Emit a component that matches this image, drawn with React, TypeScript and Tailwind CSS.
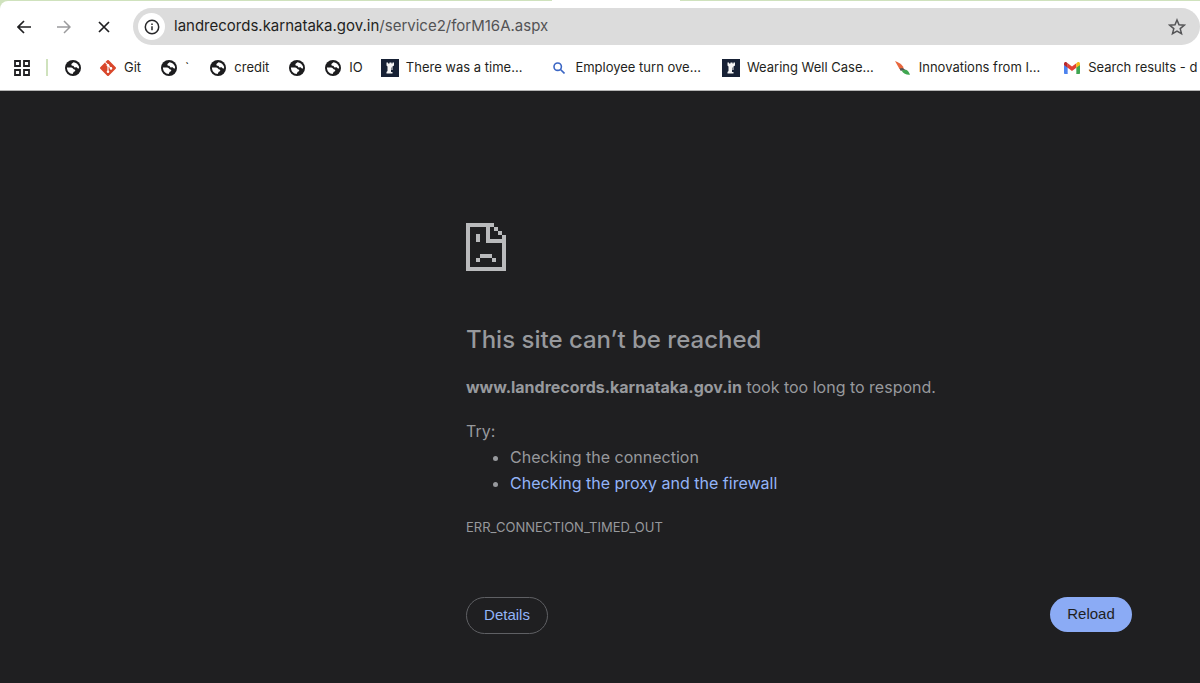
import type { ReactNode } from "react";

function Globe() {
  return (
    <svg viewBox="0 0 24 24" className="size-4 shrink-0" aria-hidden="true">
      <circle cx="12" cy="12" r="12" fill="#1c1c1e" />
      <path
        d="M12.8 3.2c3.6.3 6.6 2.6 8 6.2.3 1 .4 2 .3 3-1.2.8-2.500 0-3.300-1.300-.8-1.100-2.300.6-3.700-.3-1.200-.8-.7-1.800-2-2-1.700-.2-2.800-.9-2.500-2.500.2-1.400 2.300-1.700 3.200-3.100z"
        fill="#fff"
      />
      <path
        d="M2.900 11.200c2.400.2 5.300-.4 7.600.3 2 .6 1.700 2.500 3.600 2.900 1.800.4 1.600 2.400.2 2.800-1.800.5-1.900 1.800-2.700 3.800-4.900-.3-8.700-4.200-8.700-9.800z"
        fill="#fff"
      />
    </svg>
  );
}

function GitLogo() {
  return (
    <svg viewBox="0 0 24 24" className="size-[18px] shrink-0" aria-hidden="true">
      <rect x="4" y="4" width="16" height="16" rx="1.5" fill="#d9472b" transform="rotate(45 12 12)" />
      <path d="M8.5 4.5 12 8v9M12 8.500l4 4" stroke="#fff" strokeWidth="1.5" fill="none" />
      <circle cx="12" cy="8.3" r="1.7" fill="#fff" />
      <circle cx="12" cy="17" r="1.7" fill="#fff" />
      <circle cx="16" cy="12.5" r="1.7" fill="#fff" />
    </svg>
  );
}

function Rook() {
  return (
    <svg viewBox="0 0 18 18" className="size-[18px] shrink-0" aria-hidden="true">
      <path d="M0 0h18v18H0z" fill="#172135" />
      <path d="M5.5 3.5H7v1h1.5v-1h2v1h1v-1H13v3l-1.500 1V11h-1V8.500H10V13h1.500v1.500h-6V13l1-1V7.500l-1-1z" fill="#f5f5f5" />
    </svg>
  );
}

function Search() {
  return (
    <svg viewBox="0 0 12 12" className="mx-[3px] size-3 shrink-0" fill="none" stroke="#3b66c4" strokeWidth="1.6" aria-hidden="true">
      <circle cx="4.7" cy="4.7" r="3.7" />
      <path d="M7.5 7.5l4 4" />
    </svg>
  );
}

function Feather() {
  return (
    <svg viewBox="0 0 18 18" className="size-[18px] shrink-0" aria-hidden="true">
      <path d="M1 2c3 1 6.500 3 8 5.500l1 3-4.500-.5z" fill="#e8663c" />
      <path d="M5.500 9.500l3-.5 4 2.500-6 .3z" fill="#555" />
      <path d="M7.500 11.500l4.500-.7c2 .9 3.300 2.800 4 4.900-3.500.3-6.500-.9-8.500-4.200z" fill="#3fa650" />
    </svg>
  );
}

function Gmail() {
  return (
    <svg viewBox="0 0 24 18" className="w-4 shrink-0" aria-hidden="true">
      <path d="M0 4v12.400C0 17.300.7 18 1.600 18h3.900V7z" fill="#4c83ee" />
      <path d="M24 4v12.400c0 .9-.7 1.600-1.600 1.600h-3.900V7z" fill="#3fa652" />
      <path d="M5.500 8.500V1.800L12 6.600l6.500-4.800v6.700L12 13.400z" fill="#e34133" />
      <path d="M0 2.500v2l5.500 4V1.800L4 .6C2.300-.6 0 .5 0 2.500z" fill="#b8282a" />
      <path d="M24 2.500v2l-5.500 4V1.800L20 .6c1.700-1.200 4-.1 4 1.900z" fill="#f5bb17" />
    </svg>
  );
}

function SadFile() {
  return (
    <svg viewBox="0 0 40 48" className="w-10 fill-[#b9babc]" shapeRendering="crispEdges" aria-hidden="true">
      <path d="M0 0h28v4H4v40h32V20H20V4h4v12h12v-4h4v36H0z" />
      <path d="M28 4h4v4h-4zM32 8h4v4h-4zM10 11h4v8h-4zM14 31h12v4H14zM10 35h4v4h-4zM26 35h4v4h-4z" />
    </svg>
  );
}

type Bookmark = { label?: string; name: string; icon: ReactNode; className: string };

const bookmarks: Bookmark[] = [
  { name: "Bookmark", icon: <Globe />, className: "ml-[17px]" },
  { name: "Git", label: "Git", icon: <GitLogo />, className: "ml-[18px] gap-[7px]" },
  { name: "`", label: "`", icon: <Globe />, className: "ml-5 gap-2" },
  { name: "credit", label: "credit", icon: <Globe />, className: "ml-[21px] gap-2" },
  { name: "Bookmark", icon: <Globe />, className: "ml-5" },
  { name: "IO", label: "IO", icon: <Globe />, className: "ml-5 gap-2" },
  { name: "There was a time", label: "There was a time...", icon: <Rook />, className: "ml-[18px] gap-[7px]" },
  { name: "Employee turn over", label: "Employee turn ove...", icon: <Search />, className: "ml-7 gap-[7px]" },
  { name: "Wearing Well", label: "Wearing Well Case...", icon: <Rook />, className: "ml-[21px] gap-[7px]" },
  { name: "Innovations", label: "Innovations from I...", icon: <Feather />, className: "ml-5 gap-[7px]" },
  { name: "Search results", label: "Search results - d", icon: <Gmail />, className: "ml-6 gap-2" },
];

function Toolbar() {
  return (
    <div className="flex items-center pt-[7px] pb-1">
      <div className="flex w-[133px] shrink-0 items-center gap-5 pl-3.5">
        <button aria-label="Back" className="flex size-5 items-center justify-center">
          <svg viewBox="0 0 14 14" className="size-3.5" fill="none" stroke="#1f1f21" strokeWidth="1.7" aria-hidden="true">
            <path d="M14 7H1.500M7 1L1 7l6 6" />
          </svg>
        </button>
        <button aria-label="Forward" className="flex size-5 items-center justify-center">
          <svg viewBox="0 0 14 14" className="size-3.5" fill="none" stroke="#9b9b9d" strokeWidth="1.5" aria-hidden="true">
            <path d="M0 7h12.500M7 1l6 6-6 6" />
          </svg>
        </button>
        <button aria-label="Stop" className="flex size-5 items-center justify-center">
          <svg viewBox="0 0 12 12" className="size-3" fill="none" stroke="#1f1f21" strokeWidth="1.7" aria-hidden="true">
            <path d="M1 1l10 10M11 1L1 11" />
          </svg>
        </button>
      </div>
      <div className="flex h-[37px] grow items-center rounded-full bg-[#dcdcdc] pr-3.5 pl-[5px]">
        <button aria-label="Site information" className="flex size-[27px] items-center justify-center rounded-full bg-white">
          <svg viewBox="0 0 16 16" className="size-4" fill="none" stroke="#28282a" strokeWidth="1.5" aria-hidden="true">
            <circle cx="8" cy="8" r="6.7" />
            <path d="M8 7.200v4M8 4.500v1.500" />
          </svg>
        </button>
        <div className="ml-[9px] grow text-[15px] text-[#1f1f21]">
          landrecords.karnataka.gov.in<span className="text-[#535355]">/service2/forM16A.aspx</span>
        </div>
        <button aria-label="Bookmark this page">
          <svg viewBox="0 0 18 18" className="size-[18px]" fill="none" stroke="#555557" strokeWidth="1.5" aria-hidden="true">
            <path d="M9 2l2 4.800 5.200.4-4 3.400 1.300 5.100L9 13l-4.500 2.700 1.300-5.100-4-3.400L7 6.800z" />
          </svg>
        </button>
      </div>
    </div>
  );
}

function BookmarksBar() {
  return (
    <nav aria-label="Bookmarks" className="flex h-[37px] items-center overflow-hidden pl-3.5 text-[13px] whitespace-nowrap text-[#1f1f21]">
      <button aria-label="Apps" className="shrink-0">
        <svg viewBox="0 0 16 16" className="size-4" fill="none" stroke="#1f1f21" strokeWidth="1.8" aria-hidden="true">
          <path d="M1 1h5v5H1zM10 1h5v5h-5zM1 10h5v5H1zM10 10h5v5h-5z" />
        </svg>
      </button>
      <div className="ml-4 h-[17px] w-0.5 shrink-0 bg-[#cfe2bd]" />
      {bookmarks.map((item, i) => (
        <a key={i} href="#" aria-label={item.label ? undefined : item.name} className={`flex shrink-0 items-center ${item.className}`}>
          {item.icon}
          {item.label && <span>{item.label}</span>}
        </a>
      ))}
    </nav>
  );
}

export default function App() {
  return (
    <div className="flex min-h-screen flex-col bg-[#1f1f21] font-['Inter',sans-serif]">
      <header className="bg-[#cfe2bd]">
        <div className="flex h-px justify-center">
          <div className="ml-8 w-32 bg-white" />
        </div>
        <div className="rounded-tl-lg border-b border-[#b5b5b5] bg-white pb-1">
          <Toolbar />
          <BookmarksBar />
        </div>
      </header>
      <main className="mr-[68px] ml-[466px] pt-[132px] text-[#97999d]">
        <SadFile />
        <h1 className="mt-[53px] text-2xl leading-8 font-medium">This site can’t be reached</h1>
        <p className="mt-[18px] text-base leading-[26px]">
          <strong>www.landrecords.karnataka.gov.in</strong> took too long to respond.
        </p>
        <p className="mt-[18px] text-base leading-[26px]">Try:</p>
        <ul className="list-disc pl-11 text-base leading-[26px]">
          <li>Checking the connection</li>
          <li>
            <a href="#" className="text-[#93b4f8]">Checking the proxy and the firewall</a>
          </li>
        </ul>
        <p className="mt-[21px] text-[13px] leading-5">ERR_CONNECTION_TIMED_OUT</p>
        <div className="mt-[60px] flex items-start justify-between font-['Liberation_Sans',Arial,sans-serif] text-[15px]">
          <button className="h-[37px] w-[82px] rounded-full border border-[#5f6064] text-[#93b4f8]">Details</button>
          <button className="h-[35px] w-[82px] rounded-full bg-[#8babf5] text-[#1f1f21]">Reload</button>
        </div>
      </main>
    </div>
  );
}
